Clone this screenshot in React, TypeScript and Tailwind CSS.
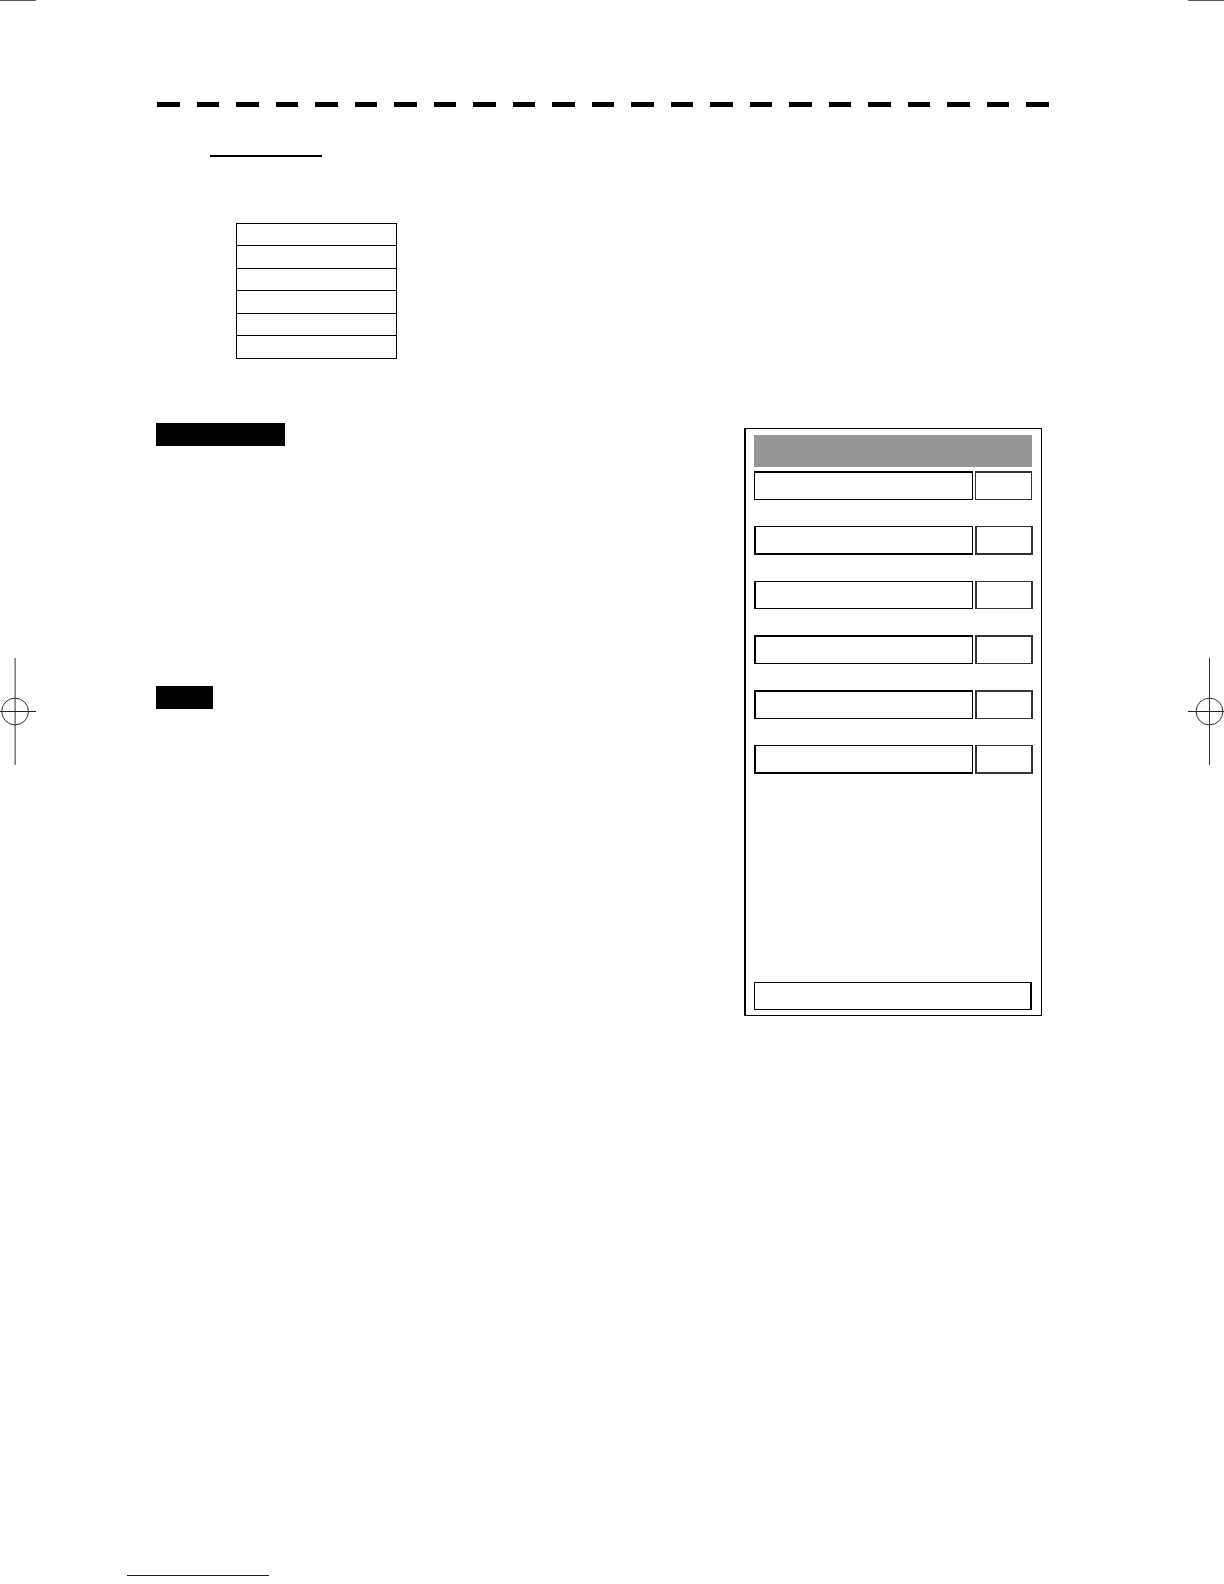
import React from 'react';
import clsx from 'clsx';

const dashes = Array.from({ length: 23 }, (_, i) => i);
const tableRows = [1, 2, 3, 4, 5, 6];

const menuRows = [
  { id: 1, row: 'h-[29px] mb-[26px] pr-px', item: 'border border-t-2', value: 'border border-t-2' },
  { id: 2, row: 'h-[29px] mb-[26px]', item: 'border border-l-2 border-b-2', value: 'border-2 border-t' },
  { id: 3, row: 'h-[28px] mb-[26px]', item: 'border border-l-2', value: 'border border-x-2' },
  { id: 4, row: 'h-[29px] mb-[26px]', item: 'border border-l-2 border-t-2', value: 'border-2 border-b' },
  { id: 5, row: 'h-[29px] mb-[26px]', item: 'border border-l-2 border-t-2', value: 'border-2 border-b' },
  { id: 6, row: 'h-[29px]', item: 'border border-l-2 border-b-2', value: 'border-2 border-t' },
];

const RegistrationMark: React.FC<{ side: 'left' | 'right' }> = ({ side }) => {
  const cx = side === 'left' ? 15.1 : 21.5;
  return (
    <div className="w-9 shrink-0 flex flex-col">
      <div className="h-px bg-[#5c5c5c]" />
      <svg className="mt-[657px] w-9 h-[107px]" viewBox="0 0 36 107" fill="none" aria-hidden="true">
        <path d={`M${cx} 0V107`} stroke="#333" />
        <path d="M0 53.5H36" stroke="#222" />
        <circle cx={cx} cy="53.5" r="13.4" stroke="#333" />
      </svg>
    </div>
  );
};

const DashedRule: React.FC = () => (
  <div className="flex justify-between ml-[121px] mr-[139px]">
    {dashes.map((i) => (
      <span key={i} className="h-[5px] bg-black odd:w-[23px] even:w-[22px]" />
    ))}
  </div>
);

const MenuPanel: React.FC = () => (
  <nav className="mt-[5px] w-[298px] min-h-[588px] flex flex-col border border-l-2 border-black pt-[6px] pb-[5px] pl-2 pr-2">
    <div className="h-8 mr-px mb-1 bg-[#969696]" />
    {menuRows.map(({ id, row, item, value }) => (
      <div key={id} className={clsx('flex gap-[2px]', row)}>
        <button aria-label={`Menu item ${id}`} className={clsx('w-[219px] border-black', item)} />
        <button aria-label={`Menu value ${id}`} className={clsx('flex-1 border-[#333333]', value)} />
      </div>
    ))}
    <button aria-label="Close menu" className="mt-auto mr-px h-7 border border-r-2 border-black" />
  </nav>
);

export default function App() {
  return (
    <div className="min-h-screen flex bg-white font-['Liberation_Sans',sans-serif]">
      <RegistrationMark side="left" />
      <main className="flex-1 flex flex-col pt-[102px] pb-2">
        <DashedRule />
        <div className="mt-12 ml-[174px] w-28 h-[2px] bg-black" />
        <table className="mt-[66px] ml-[200px] w-[161px] border-separate border-spacing-0 border-t border-black">
          <tbody>
            {tableRows.map((row) => (
              <tr key={row} className="odd:h-[22px] even:h-[23px]">
                <td className="p-0 border-x border-b border-black" />
              </tr>
            ))}
          </tbody>
        </table>
        <div className="mt-16 ml-[120px] mr-[146px] flex justify-between">
          <section>
            <div className="w-[129px] h-[23px] bg-black" />
            <div className="mt-60 w-[57px] h-[23px] bg-black" />
          </section>
          <MenuPanel />
        </div>
        <footer className="mt-auto ml-[91px]">
          <a href="#top" aria-label="Back to top" className="block w-[142px] h-px bg-[#10108c]" />
        </footer>
      </main>
      <RegistrationMark side="right" />
    </div>
  );
}
